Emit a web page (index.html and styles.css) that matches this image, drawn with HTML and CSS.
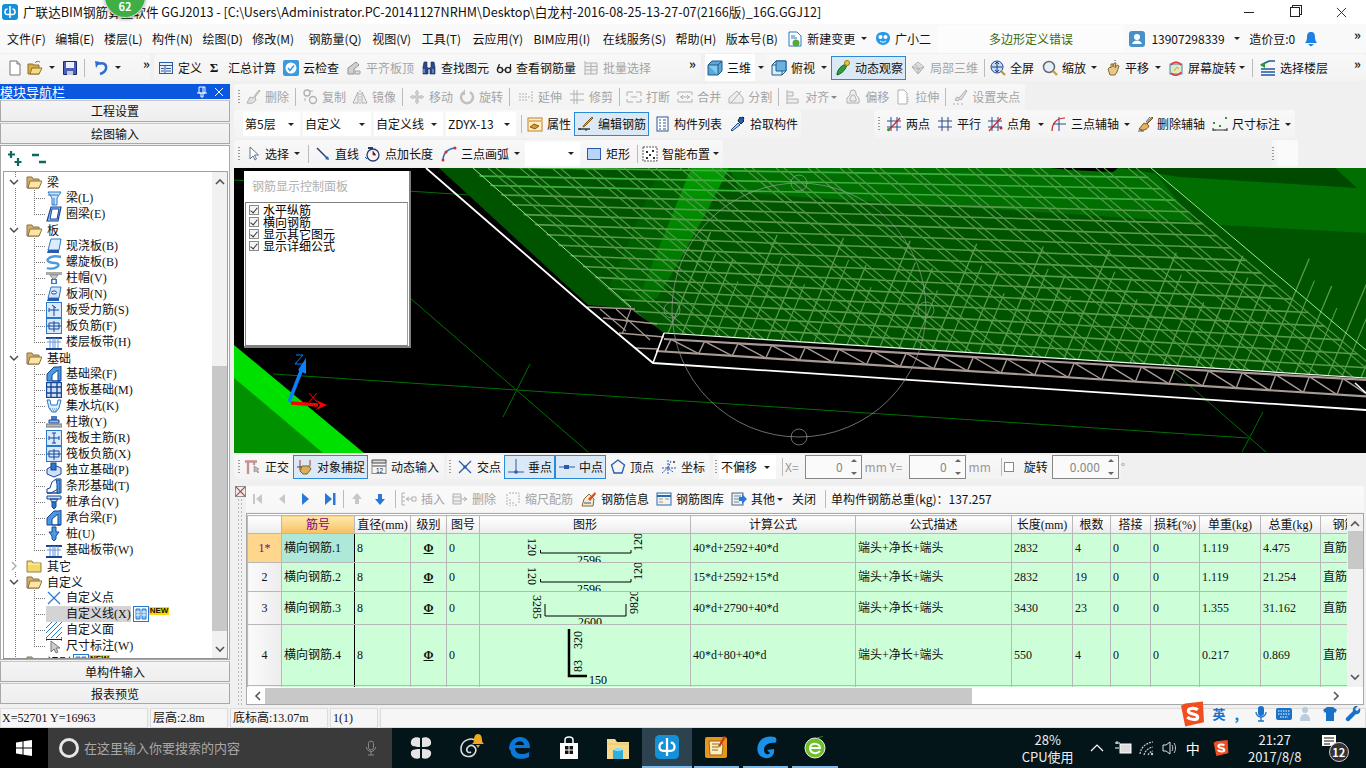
FILE: index.html
```html
<!DOCTYPE html>
<html lang="zh-CN">
<head>
<meta charset="utf-8">
<title>广联达BIM钢筋算量软件 GGJ2013</title>
<link rel="stylesheet" href="styles.css">
</head>
<body>
<svg class="sprite" xmlns="http://www.w3.org/2000/svg">
<defs>
<symbol id="new" viewBox="0 0 16 16"><path d="M3 1h7l3 3v11H3z" fill="#fff" stroke="#777"/><path d="M10 1v3h3" fill="#ddd" stroke="#777"/></symbol>
<symbol id="open" viewBox="0 0 16 16"><path d="M1 4h5l1 1h5v9H1z" fill="#d8ac44" stroke="#8f6f28"/><path d="M3 14l2-6h10l-3 6z" fill="#f5dc8a" stroke="#8f6f28"/><path d="M8 3c1-2 3-2 5-1" stroke="#3a7bd5" fill="none"/></symbol>
<symbol id="save" viewBox="0 0 16 16"><path d="M1.500 1.500h13v13h-13z" fill="#4a5fb8" stroke="#1a2a70"/><path d="M4 2h8v6H4z" fill="#eef"/><path d="M5 11h6v4H5z" fill="#c4c8d8"/></symbol>
<symbol id="undo" viewBox="0 0 16 16"><path d="M5 4c5-2 9 0 8 5-1 3-3 4-6 5" stroke="#2a6fd0" stroke-width="2.400" fill="none"/><path d="M2 1l5 1-4 6z" fill="#2a6fd0"/></symbol>
<symbol id="def" viewBox="0 0 16 16"><rect x="1.500" y="2.500" width="13" height="11" fill="#e8f0fa" stroke="#2a5aa0"/><path d="M2 5.500h12M3 8.500h3M3 11h3M8 8.500h5M8 11h5M7 6v7" stroke="#2a5aa0"/></symbol>
<symbol id="cloud" viewBox="0 0 16 16"><rect x="0" y="0" width="16" height="16" rx="2" fill="#3a9ae0"/><circle cx="8" cy="8" r="5.500" fill="#fff"/><path d="M5 8l2 2.500 4-5" stroke="#3a9ae0" stroke-width="1.600" fill="none"/></symbol>
<symbol id="flush" viewBox="0 0 16 16"><path d="M2 14V8l8-6 3 3-5 4v5z" fill="#ccc" stroke="#888"/><path d="M9 14v-3h5v3z" fill="#ddd" stroke="#999"/></symbol>
<symbol id="bino" viewBox="0 0 16 16"><path d="M2 7l1-5h3v5l1 1h2l1-1V2h3l1 5v7H9V9H7v5H2z" fill="#2b4a8a" stroke="#142850" stroke-width=".6"/><path d="M3 9v4M12 9v4" stroke="#9db8e8"/></symbol>
<symbol id="glass" viewBox="0 0 16 16"><circle cx="4" cy="10" r="2.600" fill="none" stroke="#222" stroke-width="1.400"/><circle cx="12" cy="10" r="2.600" fill="none" stroke="#222" stroke-width="1.400"/><path d="M1.500 9l2-5M14.500 9V4M6.500 10h3" stroke="#222" stroke-width="1.200" fill="none"/></symbol>
<symbol id="batch" viewBox="0 0 16 16"><path d="M2 1v14M2 3h12v11H2M2 6.500h12M2 10h12M8 3v11" fill="#eee" stroke="#aaa"/></symbol>
<symbol id="cube" viewBox="0 0 16 16"><path d="M1 5l4-4h10v10l-4 4H1z" fill="#5aa8dc" stroke="#1e5a8c"/><path d="M1 5h10v10M11 5l4-4" fill="#8cc8ec" stroke="#1e5a8c"/></symbol>
<symbol id="top" viewBox="0 0 16 16"><path d="M1 5l4-4h10v10l-4 4H1z" fill="#d8ecfa" stroke="#1e5a8c"/><path d="M1 5h10v10M11 5l4-4" fill="none" stroke="#1e5a8c"/><path d="M5 1h10v10H5z" fill="#6ab0e0" stroke="#1e5a8c"/></symbol>
<symbol id="orbit" viewBox="0 0 16 16"><path d="M2 15c0-5 4-10 10-11-1 5-4 9-10 11z" fill="#2fa03a" stroke="#156020"/><circle cx="12" cy="3" r="2.500" fill="#f3c72c" stroke="#9a7a10"/></symbol>
<symbol id="local" viewBox="0 0 16 16"><path d="M2 7l6-5 6 5-6 7z" fill="#ddd" stroke="#aaa"/><path d="M2 7l6 2 6-2M8 9v5M5 4l6 7" stroke="#aaa" fill="none"/></symbol>
<symbol id="full" viewBox="0 0 16 16"><circle cx="7" cy="7" r="6" fill="#c8dcf4" stroke="#20408a"/><path d="M7 2v10M2 7h10M5 4l2-2 2 2M5 10l2 2 2-2" stroke="#20408a" fill="none"/><path d="M11 11l4 4" stroke="#c89020" stroke-width="2"/></symbol>
<symbol id="zoomi" viewBox="0 0 16 16"><circle cx="7" cy="7" r="5.500" fill="#e8eef6" stroke="#606a78" stroke-width="1.500"/><path d="M11 11l4 4" stroke="#d0a020" stroke-width="2.400"/></symbol>
<symbol id="hand" viewBox="0 0 16 16"><path d="M3 9l2-2 1 1V4h2v3l1-4h2l-1 5 2-3 2 1-2 6-2 3H5z" fill="#e8c888" stroke="#8a6a30"/><path d="M10 1v-1" stroke="#456"/></symbol>
<symbol id="srot" viewBox="0 0 16 16"><rect x="2" y="4" width="12" height="10" fill="#d8ecc8" stroke="#4a80b8"/><path d="M3 5a6 6 0 0 1 10 0M13 12a6 6 0 0 1-10 1" stroke="#e03030" stroke-width="1.400" fill="none"/><path d="M6 11l3-4 2 2" stroke="#e0a020" fill="none"/></symbol>
<symbol id="layer" viewBox="0 0 16 16"><path d="M1 5l8-4h6M1 9h14M1 12h14M1 15h14" stroke="#1a5aa0" stroke-width="1.600" fill="none"/><path d="M0 5l5-3v6z" fill="#2a9a30"/></symbol>
<symbol id="doc" viewBox="0 0 16 16"><path d="M2 1h8l4 4v10H2z" fill="#fff" stroke="#2a78c8"/><path d="M4 5h4M4 7h6" stroke="#2a78c8"/><circle cx="9" cy="12" r="3.500" fill="#5aa838"/></symbol>
<symbol id="robot" viewBox="0 0 16 16"><path d="M1 7c0-4 3-6 7-6s7 2 7 6-3 7-7 7-7-3-7-7z" fill="#2a9ae8"/><circle cx="5.500" cy="6" r="2" fill="#fff"/><circle cx="10.500" cy="6" r="2" fill="#fff"/><path d="M5 10c2 1.500 4 1.500 6 0" stroke="#fff" fill="none"/></symbol>
<symbol id="user" viewBox="0 0 16 16"><rect width="16" height="16" rx="3" fill="#4a90c8"/><circle cx="8" cy="6" r="3" fill="#fff"/><path d="M3 13c1-3 3-3.500 5-3.500s4 .5 5 3.500z" fill="#fff"/></symbol>
<symbol id="bell" viewBox="0 0 16 16"><path d="M8 1c3 0 4 2 4 5 0 3 1 5 2 6H2c1-1 2-3 2-6 0-3 1-5 4-5z" fill="#1e80e0"/><path d="M5 13h6l-3 2.500z" fill="#1e80e0"/></symbol>
<symbol id="logo" viewBox="0 0 16 16"><rect width="16" height="16" rx="3" fill="#1590d8"/><path d="M8 2v12M5.500 5C2.500 5 2 10 5 10.500h6c3-.5 2.500-5.500-.5-5.500" stroke="#fff" stroke-width="1.500" fill="none"/></symbol>

<symbol id="del" viewBox="0 0 16 16"><path d="M14 1l-6 8-3-1-3 6c4 1 7 0 9-3l-1-3 5-6z" fill="#ddd" stroke="#aaa"/></symbol>
<symbol id="copy" viewBox="0 0 16 16"><circle cx="5" cy="4" r="3" fill="none" stroke="#aaa" stroke-width="1.400"/><circle cx="11" cy="11" r="3.500" fill="none" stroke="#aaa" stroke-width="1.400"/><path d="M8 2h3M3 9v3" stroke="#aaa"/></symbol>
<symbol id="mirror" viewBox="0 0 16 16"><path d="M6 3v11H1zM10 3v11h5z" fill="#eee" stroke="#aaa"/><path d="M8 1v14" stroke="#aaa" stroke-dasharray="2 1"/></symbol>
<symbol id="move" viewBox="0 0 16 16"><path d="M8 1l2 3H9v3h3V6l3 2-3 2V9H9v3h1l-2 3-2-3h1V9H4v1L1 8l3-2v1h3V4H6z" fill="#ccc" stroke="#aaa" stroke-width=".5"/></symbol>
<symbol id="rot" viewBox="0 0 16 16"><path d="M11 3a6 6 0 1 1-6 0" stroke="#bbb" stroke-width="2.500" fill="none"/><path d="M6 0v6H2z" fill="#bbb"/></symbol>
<symbol id="ext" viewBox="0 0 16 16"><path d="M14 2v12M1 5h9M1 11h9M1 8h11" stroke="#aaa" fill="none" stroke-dasharray="2 1"/></symbol>
<symbol id="trim" viewBox="0 0 16 16"><path d="M8 1v14M5 1v14M1 5h14M1 11h14" stroke="#aaa" fill="none"/></symbol>
<symbol id="brk" viewBox="0 0 16 16"><path d="M1 3h6M10 3h5M1 13h6M10 13h5M1 3v4M15 3v4M1 13v-3M15 13v-3M5 8h6" stroke="#aaa" fill="none"/></symbol>
<symbol id="merge" viewBox="0 0 16 16"><path d="M1 3h14M1 13h14M1 3v3M15 3v3M1 13v-3M15 13v-3M3 8h10M6 6l-2 2 2 2M10 6l2 2-2 2" stroke="#aaa" fill="none"/></symbol>
<symbol id="split" viewBox="0 0 16 16"><path d="M1 14h14L15 9 9 2 1 9z" fill="#eee" stroke="#aaa"/><path d="M13 2L3 14" stroke="#aaa"/></symbol>
<symbol id="align" viewBox="0 0 16 16"><path d="M2 1v14M2 3h6v4H2M2 10h11v4H2" fill="#eee" stroke="#aaa"/></symbol>
<symbol id="offs" viewBox="0 0 16 16"><path d="M2 14V9l3-3V4a3 3 0 0 1 6 0v2l3 3v5z" fill="#eee" stroke="#aaa"/><path d="M5 12V9l1-1a2 2 0 0 1 4 0l1 1v3z" fill="none" stroke="#aaa"/></symbol>
<symbol id="stch" viewBox="0 0 16 16"><path d="M3 1h6l3 3v11H3z" fill="#fff" stroke="#aaa"/><path d="M13 8v6" stroke="#aaa" stroke-dasharray="1 1"/></symbol>
<symbol id="grip2" viewBox="0 0 16 16"><path d="M14 1l-7 8-2-1-2 3 3 1 1-2 2 1 6-9zM1 15h2M5 15h2M9 15h2" fill="#ddd" stroke="#aaa"/></symbol>

<symbol id="attr" viewBox="0 0 16 16"><rect x="1" y="2" width="14" height="13" fill="#fdf0c8" stroke="#c88020"/><path d="M2 5h12" stroke="#c88020"/><path d="M3 11l4-3 5 2-4 3z" fill="#d89830" stroke="#8a5a10"/></symbol>
<symbol id="edit" viewBox="0 0 16 16"><path d="M0 13h12" stroke="#222" stroke-width="1.300"/><path d="M15 2l-8 8-2 1 1-2 8-8z" fill="#e0a040" stroke="#8a5a10"/><path d="M2 12v2M8 13v2" stroke="#222"/></symbol>
<symbol id="list" viewBox="0 0 16 16"><rect x="3" y="1" width="11" height="14" fill="#fff" stroke="#2a5a90"/><path d="M5 4h2M5 7h2M5 10h2M5 13h2M9 4h3M9 7h3M9 10h3M9 13h3" stroke="#2a5a90"/></symbol>
<symbol id="pick" viewBox="0 0 16 16"><path d="M2 15l-1-1 7-7 2 2z" fill="#a8d0f0" stroke="#1a4a8a"/><path d="M8 5l3 3 3-3-1-1 1-2-1-1-2 1-1-1z" fill="#2a60b0" stroke="#123"/></symbol>
<symbol id="two" viewBox="0 0 16 16"><path d="M1 5h14M1 11h14M5 1v14M11 1v14" stroke="#2a4a90" fill="none"/><path d="M2 15L14 2" stroke="#d02020" stroke-width="1.200"/><circle cx="2.500" cy="13.500" r="1.500" fill="#2a9a30"/></symbol>
<symbol id="para" viewBox="0 0 16 16"><path d="M1 5h14M1 11h14M5 1v14M11 1v14" stroke="#2a4a90" fill="none"/></symbol>
<symbol id="ang" viewBox="0 0 16 16"><path d="M1 5h14M1 11h14M5 1v14M11 1v14" stroke="#2a4a90" fill="none"/><path d="M2 15L14 2" stroke="#d02020" stroke-width="1.200"/><circle cx="14" cy="12" r="1.500" fill="#d02020"/></symbol>
<symbol id="arcx" viewBox="0 0 16 16"><path d="M1 15C1 7 6 2 14 2" stroke="#d02020" stroke-width="1.200" fill="none"/><path d="M8 1v14M2 8h13" stroke="#2a4a90"/></symbol>
<symbol id="delx" viewBox="0 0 16 16"><path d="M15 1L9 8l-2-1-5 6c4 2 8 1 10-3l-2-2 6-6z" fill="#e8b060" stroke="#7a5a20"/><path d="M1 15h6M2 12l3 3" stroke="#555"/><path d="M13 1l-4 5" stroke="#2a60b0"/></symbol>
<symbol id="dim" viewBox="0 0 16 16"><path d="M1 12v3M15 12v3M1 14h14M3 13.500v1M13 13.500v1" stroke="#333" fill="none"/><rect x="1" y="6" width="2" height="2" fill="#2a9a30"/><rect x="7" y="9" width="2" height="2" fill="#2a9a30"/><rect x="13" y="1" width="2" height="2" fill="#2a9a30"/></symbol>
<symbol id="arrow" viewBox="0 0 16 16"><path d="M5 1v12l3-3 2 4 1.500-1-2-4h4z" fill="#fff" stroke="#456" stroke-width=".8"/></symbol>
<symbol id="linet" viewBox="0 0 16 16"><path d="M2 2l11 11" stroke="#2a3a70" stroke-width="1.400"/><path d="M14 14l-4-1 3-3z" fill="#2a6ac0"/></symbol>
<symbol id="ptlen" viewBox="0 0 16 16"><circle cx="8" cy="9" r="6" fill="none" stroke="#2a3a70" stroke-width="1.300"/><path d="M3 2h5" stroke="#2a3a70" stroke-width="2"/><path d="M8 5v4h3" stroke="#d03030"/><path d="M2 13l-2-2" stroke="#2a6ac0"/></symbol>
<symbol id="arc3" viewBox="0 0 16 16"><path d="M2 15C2 8 6 3 14 2" stroke="#2a6ac0" stroke-width="1.400" fill="none"/><circle cx="2" cy="14" r="1.500" fill="#d03030"/><circle cx="14" cy="2" r="1.500" fill="#d03030"/><circle cx="5" cy="6" r="1.500" fill="#d03030"/></symbol>
<symbol id="rect" viewBox="0 0 16 16"><rect x="1.500" y="2.500" width="13" height="11" fill="#b8d4f8" stroke="#2a5ab0"/></symbol>
<symbol id="smart" viewBox="0 0 16 16"><rect x="1" y="1" width="14" height="14" fill="#fff" stroke="#555" stroke-dasharray="2 1"/><path d="M4 5h2v2H4zM10 4h2v2h-2zM7 8h2v2H7zM4 11h2v2H4zM11 11h2v2h-2z" fill="#333"/></symbol>

<symbol id="ortho" viewBox="0 0 16 16"><path d="M0 2.500h12M3 2v13M9 2v4" stroke="#c89090" stroke-width="2.400" fill="none"/><path d="M9 7v6l2-1 2 2 1-1-2-2 2-1z" fill="#bbb" stroke="#777" stroke-width=".5"/></symbol>
<symbol id="snap" viewBox="0 0 16 16"><path d="M3 1v10M13 1v6" stroke="#b03030"/><path d="M0 8h6" stroke="#345"/><path d="M5 7h7l2 3-4 5H6l-3-3z" fill="#d8b060" stroke="#806020"/></symbol>
<symbol id="dyn" viewBox="0 0 16 16"><path d="M1 1h14v3H1zM1 7h14" stroke="#444" fill="#ddd"/><path d="M1 4v11M15 4v11M1 14.500h14" stroke="#888" fill="none"/><text x="5" y="14" font-size="6.500" font-family="Liberation Sans, sans-serif" fill="#222">12</text></symbol>
<symbol id="cross" viewBox="0 0 16 16"><path d="M2 2l12 12M14 2L2 14" stroke="#2a5ab0" stroke-width="1.300"/><rect x="6.500" y="6.500" width="3" height="3" fill="#2a5ab0"/></symbol>
<symbol id="perp" viewBox="0 0 16 16"><path d="M8 0v13M0 13h16" stroke="#2a5ab0"/><circle cx="8" cy="13" r="1.800" fill="#2a5ab0"/></symbol>
<symbol id="mid" viewBox="0 0 16 16"><path d="M0 8h16" stroke="#2a5ab0"/><rect x="5" y="6" width="5" height="4" fill="#2a5ab0"/></symbol>
<symbol id="apex" viewBox="0 0 16 16"><path d="M8 1l6.500 5-2.500 8H4L1.500 6z" fill="none" stroke="#2a5ab0" stroke-width="1.300"/></symbol>
<symbol id="coord" viewBox="0 0 16 16"><path d="M1 14l6-5M7 1v14M1 9h14M10 2l-3 7 5 4" stroke="#2a5ab0" fill="none" stroke-dasharray="2 1"/><circle cx="13" cy="3" r="1" fill="#333"/></symbol>

<symbol id="nfirst" viewBox="0 0 16 16"><path d="M4 3h2v10H4zM13 3L7 8l6 5z" fill="#c8c8c8"/></symbol>
<symbol id="nprev" viewBox="0 0 16 16"><path d="M11 3L5 8l6 5z" fill="#c8c8c8"/></symbol>
<symbol id="nnext" viewBox="0 0 16 16"><path d="M5 2l7 6-7 6z" fill="#2a78d8"/></symbol>
<symbol id="nlast" viewBox="0 0 16 16"><path d="M3 2l7 6-7 6zM11 2h2.500v12H11z" fill="#2a78d8"/></symbol>
<symbol id="nup" viewBox="0 0 16 16"><path d="M8 2l5 6h-3v5H6V8H3z" fill="#c8c8c8"/></symbol>
<symbol id="ndown" viewBox="0 0 16 16"><path d="M8 14l5-6h-3V3H6v5H3z" fill="#2a78d8"/></symbol>
<symbol id="tins" viewBox="0 0 16 16"><path d="M1 2h3M1 6h3M1 10h3M1 14h3M1 2v12M5 8h6M8 6l-3 2 3 2M11 6h4v4h-4z" stroke="#aaa" fill="none"/></symbol>
<symbol id="tdel" viewBox="0 0 16 16"><path d="M1 3h8v10H1zM1 6h8M1 10h8M9 8h6M12 6l3 2-3 2" stroke="#aaa" fill="#eee"/></symbol>
<symbol id="tscale" viewBox="0 0 16 16"><path d="M2 3v12M5 8v7M8 11v4M11 13v2M4 2h10v10" stroke="#aaa" fill="none" stroke-dasharray="2 1"/></symbol>
<symbol id="tinfo" viewBox="0 0 16 16"><path d="M1 15l2-7 5-5 5 5-1 7z" fill="#f5e8c8" stroke="#8a6a30"/><path d="M7 8l7-7 1 2-6 7z" fill="#d85020"/><path d="M3 12h7" stroke="#2a5ab0"/></symbol>
<symbol id="tlib" viewBox="0 0 16 16"><rect x="1" y="2" width="14" height="12" fill="#eef4fc" stroke="#2a6ab0"/><path d="M1 5h14" stroke="#2a6ab0" stroke-width="2"/><path d="M3 8h4M9 8h4M3 11h4" stroke="#d09030"/></symbol>
<symbol id="toth" viewBox="0 0 16 16"><rect x="1" y="2" width="11" height="12" fill="#e8f0f8" stroke="#567"/><path d="M3 5h7M3 8h5M3 11h5" stroke="#789"/><path d="M8 6h3V3l5 5-5 5v-3H8z" fill="#2a78d8"/></symbol>

<symbol id="fopen" viewBox="0 0 16 16"><path d="M1 3h5l1 2h6v9H1z" fill="#d8b060" stroke="#8a7040"/><path d="M2 14l2-7h12l-3 7z" fill="#fbe6a8" stroke="#8a7040"/></symbol>
<symbol id="fclose" viewBox="0 0 16 16"><path d="M1 3h5l1 2h8v9H1z" fill="#f6d868" stroke="#9a8040"/><path d="M2 6h12" stroke="#fff5c0"/></symbol>
<symbol id="vdown" viewBox="0 0 10 10"><path d="M1 3l4 4 4-4" stroke="#444" stroke-width="1.400" fill="none"/></symbol>
<symbol id="vright" viewBox="0 0 10 10"><path d="M3 1l4 4-4 4" stroke="#aaa" stroke-width="1.400" fill="none"/></symbol>
<symbol id="beam" viewBox="0 0 16 16"><path d="M2 2h13l-4 6v7H6V8z" fill="#cfe6fb" stroke="#2a78c8"/><path d="M2 5h10M8 8v7" stroke="#2a78c8"/></symbol>
<symbol id="ring" viewBox="0 0 16 16"><path d="M5 1h10l-3 14H1z" fill="#9cc4ec" stroke="#15469a" stroke-width="1.200"/><path d="M6 3h7l-2 10H4z" fill="#fff" stroke="#15469a"/></symbol>
<symbol id="slabi" viewBox="0 0 16 16"><path d="M5 1h10l-2 11H2z" fill="#dcecfb" stroke="#2a78c8"/><path d="M2 12h11v3H1z" fill="#2a5ab0"/></symbol>
<symbol id="spir" viewBox="0 0 16 16"><path d="M15 3c-4-1-10-1-13 2-2 3 4 4 7 4s5 2 2 4-8 2-10 1" stroke="#4a9ae0" stroke-width="2.400" fill="none"/></symbol>
<symbol id="cap" viewBox="0 0 16 16"><rect y="2" width="16" height="3" fill="#aaa"/><path d="M4 5h8L9 9H7z" fill="#ccc" stroke="#888"/><rect x="5" y="9" width="6" height="5" fill="#2a78c8"/><rect x="6.500" y="10" width="3" height="3" fill="#fff"/></symbol>
<symbol id="hole" viewBox="0 0 16 16"><path d="M5 1h10l-2 11H2z" fill="#cfe6fb" stroke="#2a78c8"/><path d="M2 12h11v3H1z" fill="#2a5ab0"/><ellipse cx="8" cy="6.500" rx="2.500" ry="1.500" fill="#fff" stroke="#15469a"/></symbol>
<symbol id="force" viewBox="0 0 16 16"><rect x=".5" y=".5" width="15" height="15" fill="#d8eafc" stroke="#2a78c8"/><path d="M3 8h10M8 4v10M3 6v4M6 3l4 3" stroke="#15469a" fill="none"/></symbol>
<symbol id="negi" viewBox="0 0 16 16"><rect x=".5" y=".5" width="15" height="15" fill="#d8eafc" stroke="#2a78c8"/><path d="M3 5h10v6H3zM1 8h14M8 3v11" stroke="#15469a" fill="none"/></symbol>
<symbol id="band" viewBox="0 0 16 16"><path d="M0 4h16M0 15h16" stroke="#15469a" stroke-width="2"/><path d="M4 4v10M12 4v10M7 4v10M9 4v10M1 8h14" stroke="#6a9ad8" fill="none"/></symbol>
<symbol id="fbeam" viewBox="0 0 16 16"><path d="M1 15V8l7-7h5l2-1v15h-3V4L6 9v6z" fill="#4a9ae0" stroke="#15469a"/><path d="M6 15h8" stroke="#15469a" stroke-width="1.500"/></symbol>
<symbol id="raft" viewBox="0 0 16 16"><rect x=".5" y=".5" width="15" height="15" fill="#cfe0f8" stroke="#15469a" stroke-width="1.400"/><path d="M5 1v14M11 1v14M1 5h14M1 11h14" stroke="#15469a" stroke-width="1.400"/></symbol>
<symbol id="pit" viewBox="0 0 16 16"><path d="M1 2h3l1 5h6l1-5h3l-2 8-3 4H6l-3-4z" fill="#dcecfb" stroke="#2a78c8"/><path d="M4 11h8M5 13h6" stroke="#2a78c8" stroke-dasharray="1 1"/></symbol>
<symbol id="pier" viewBox="0 0 16 16"><rect x="5" y="2" width="6" height="4" fill="#4a7ac0"/><path d="M3 6h10v3H3z" fill="#9abce8" stroke="#15469a"/><rect y="10" width="16" height="3" fill="#bbb" stroke="#777"/></symbol>
<symbol id="rmain" viewBox="0 0 16 16"><rect x=".5" y=".5" width="15" height="15" fill="#d8eafc" stroke="#2a78c8"/><path d="M3 8h10M8 3v10M3 6v4M6 3h4M13 6v4M6 13h4" stroke="#15469a" fill="none"/></symbol>
<symbol id="ifound" viewBox="0 0 16 16"><path d="M1 7l7-4 7 3v6l-7 3-7-3z" fill="#cfe0f8" stroke="#15469a"/><rect x="5" y="1" width="5" height="7" fill="#2a78c8" stroke="#15469a"/></symbol>
<symbol id="strip" viewBox="0 0 16 16"><path d="M1 15v-4l3-1 2-6 4-3h5v14h-3V11L5 15z" fill="#fff" stroke="#15469a"/><path d="M10 2h4v13h-3V6z" fill="#4a9ae0" stroke="#15469a"/><path d="M1 15h11" stroke="#15469a" stroke-width="1.400"/></symbol>
<symbol id="pcap" viewBox="0 0 16 16"><path d="M1 2h14v3H1zM4 5h8l-2 3H6z" fill="#cfe0f8" stroke="#15469a"/><path d="M6 8h4v5l-2 2-2-2z" fill="#2a78c8" stroke="#15469a"/></symbol>
<symbol id="pile" viewBox="0 0 16 16"><path d="M6 1h4v5h3l-3 4v3l-2 2-2-2v-3L3 6h3z" fill="#4a9ae0" stroke="#15469a"/></symbol>
<symbol id="xpt" viewBox="0 0 16 16"><path d="M2 2l12 12M14 2L2 14" stroke="#2a78c8" stroke-width="1.200"/></symbol>
<symbol id="xln" viewBox="0 0 16 16"><path d="M2.500 2.500h11v11h-11z" fill="none" stroke="#15469a"/><path d="M1 1h3v3H1zM12 1h3v3h-3zM1 12h3v3H1zM12 12h3v3h-3z" fill="#d8eafc" stroke="#2a78c8"/></symbol>
<symbol id="xar" viewBox="0 0 16 16"><path d="M0 6L6 0M0 11L11 0M0 16L16 0M5 16L16 5M10 16l6-6M15 16l1-1" stroke="#2a78c8"/></symbol>
<symbol id="xdim" viewBox="0 0 16 16"><path d="M0 0v3M16 0v3M0 1.500h16M3 1v1M8 1v1M13 1v1" stroke="#222"/><path d="M5 3v11l3-3 2 4 2-1-2-4h4z" fill="#ccc" stroke="#777"/></symbol>
<symbol id="tab" viewBox="0 0 16 16"><rect x=".5" y=".5" width="15" height="15" fill="#fff" stroke="#2a78c8"/><path d="M3 3h4v10H3zM9 3h4v10H9z" fill="#8cc4f4" stroke="#2a78c8"/><path d="M3 6h4M3 9h4M9 6h4M9 9h4" stroke="#fff"/></symbol>
<symbol id="plus2" viewBox="0 0 16 16"><path d="M4 0v7M1 3.500h7M11 7v8M7.500 11h7" stroke="#0a6a60" stroke-width="2.200"/></symbol>
<symbol id="minus2" viewBox="0 0 16 16"><path d="M1 4h7M8 11h7" stroke="#0a6a60" stroke-width="2.400"/></symbol>
<symbol id="pin" viewBox="0 0 12 12"><path d="M3 1h6v6H7v4H5V7H3zM1 7h10M7 1v6" stroke="#fff" fill="none"/></symbol>
<symbol id="xw" viewBox="0 0 12 12"><path d="M2 2l8 8M10 2l-8 8" stroke="#fff"/></symbol>
<symbol id="closex" viewBox="0 0 12 12"><rect x=".5" y=".5" width="11" height="11" fill="#eee" stroke="#888"/><path d="M1 1l10 10M11 1L1 11" stroke="#a05050" stroke-width="1.400"/></symbol>

<symbol id="win" viewBox="0 0 16 16"><path d="M0 2.500l6.500-1v6H0zM7.500 1.300L16 0v7.500H7.500zM0 8.500h6.500v6L0 13.500zM7.500 8.500H16V16l-8.500-1.300z" fill="#fff"/></symbol>
<symbol id="mic" viewBox="0 0 16 16"><rect x="5.500" y="1" width="5" height="9" rx="2.500" fill="none" stroke="#888"/><path d="M3.500 7a4.500 4.500 0 0 0 9 0M8 12v3M5 15h6" fill="none" stroke="#888"/></symbol>
<symbol id="fan" viewBox="0 0 24 24"><path d="M11 2C6 0 1 3 2 8c1 3 6 3 9 3zM13 2c5-2 10 1 9 6-1 3-6 3-9 3zM11 13c-3 0-8 0-9 3-1 5 4 8 9 6zM13 13c3 0 8 0 9 3 1 5-4 8-9 6z" fill="#e4e4e4"/></symbol>
<symbol id="swirl" viewBox="0 0 24 24"><path d="M20 6C14 0 3 4 3 13c0 8 10 10 14 4 3-5-3-10-7-6-3 3 0 7 3 5" fill="none" stroke="#ddd" stroke-width="1.600"/></symbol>
<symbol id="bellg" viewBox="0 0 12 14"><path d="M6 0c3 0 4 3 4 6 0 2 1 3 2 4H0c1-1 2-2 2-4 0-3 1-6 4-6zM4 11h4l-2 3z" fill="#f0a820"/></symbol>
<symbol id="edge" viewBox="0 0 24 24"><path d="M2 13C2 5 8 1 13 1c6 0 10 4 10 11H8c0 6 8 8 14 4v5c-8 4-17 1-18-4 0-1 0-3-2-4zm6-4h9c0-5-8-5-9 0z" fill="#0a78d8"/></symbol>
<symbol id="store" viewBox="0 0 24 24"><path d="M3 7h18v16H3z" fill="#fff"/><path d="M8 7V4c0-4 8-4 8 0v3" fill="none" stroke="#fff" stroke-width="1.500"/><path d="M8 10h3.500v3.500H8zM12.500 10H16v3.500h-3.500zM8 14.500h3.500V18H8zM12.500 14.500H16V18h-3.500z" fill="#111"/></symbol>
<symbol id="fold" viewBox="0 0 24 24"><path d="M1 3h8l2 3h12v17H1z" fill="#f6d98a"/><path d="M1 8h22" stroke="#eac66a"/><rect x="7" y="14" width="10" height="9" fill="#2fb0d8"/><rect x="9" y="12" width="6" height="3" fill="#8adcf0"/></symbol>
<symbol id="note" viewBox="0 0 24 24"><rect x="1" y="2" width="22" height="21" rx="2" fill="#e8961a"/><path d="M5 6h12l2 5-1 9H6z" fill="#faeebc" stroke="#a0641a"/><path d="M8 9h7M8 12h7M8 15h6" stroke="#9a6a2a"/><path d="M20 1l2 1-6 10-2-1z" fill="#c83a1a"/></symbol>
<symbol id="gblue" viewBox="0 0 24 24"><path d="M21 2c-8-2-15 1-17 8-2 7 1 12 7 13 6 1 10-3 9-9l-7 1 3 3c-2 3-6 1-6-3 0-5 5-8 11-7 2-2 2-4 0-6z" fill="#1a90e8"/></symbol>
<symbol id="egreen" viewBox="0 0 24 24"><circle cx="12" cy="13" r="10" fill="#6ec02a" stroke="#eee"/><path d="M7 13h10c0-5-9-6-10 0 0 5 6 7 10 3" fill="none" stroke="#fff" stroke-width="2"/><path d="M14 3c3-1 5-1 6-2" stroke="#3a8a1a"/></symbol>
<symbol id="up" viewBox="0 0 14 10"><path d="M1 8l6-6 6 6" stroke="#fff" stroke-width="1.200" fill="none"/></symbol>
<symbol id="plug" viewBox="0 0 18 16"><rect x="6" y="4" width="11" height="9" fill="#ddd" stroke="#fff"/><path d="M1 3h5M1 8h4M3 1v3" stroke="#fff" fill="none"/></symbol>
<symbol id="wifi" viewBox="0 0 16 16"><path d="M1 14C2 7 7 3 14 2M5 15c1-4 4-7 9-8M9 15c1-2 2-3 5-4" stroke="#ccc" stroke-width="1.200" fill="none" stroke-dasharray="2 1"/><circle cx="13" cy="14" r="1.200" fill="#ccc"/></symbol>
<symbol id="spk" viewBox="0 0 16 16"><path d="M1 5h3l4-3v12l-4-3H1z" fill="none" stroke="#ddd"/><path d="M10 5c1 2 1 4 0 6M12 3c2 3 2 7 0 10" stroke="#ccc" fill="none"/></symbol>
<symbol id="sgou" viewBox="0 0 24 24"><path d="M5 2l17-2 1 20-18 4-4-20z" fill="#f04e20"/><path d="M17 8c-2-2-9-2-9 1 0 4 9 2 9 6 0 3-7 3-10 0" fill="none" stroke="#fff" stroke-width="3"/></symbol>
<symbol id="notif" viewBox="0 0 16 16"><path d="M1 1h14v11H1z" fill="#fff"/><path d="M3 4h10M3 7h10M3 10h6" stroke="#111"/></symbol>
<symbol id="imic" viewBox="0 0 16 16"><rect x="5" y="0" width="6" height="10" rx="3" fill="#1a72c8"/><path d="M3 6a5 5 0 0 0 10 0M8 11v4M5 15h6" fill="none" stroke="#1a72c8" stroke-width="1.300"/></symbol>
<symbol id="ikey" viewBox="0 0 16 16"><rect y="2" width="16" height="12" rx="2" fill="#1a72c8"/><path d="M2 5h12M2 8h12M4 11h8" stroke="#fff" stroke-dasharray="1.500 1"/></symbol>
<symbol id="iuser" viewBox="0 0 16 16"><circle cx="6" cy="4" r="3" fill="#bcd"/><path d="M1 15c0-5 2-7 5-7s5 2 5 7z" fill="#bcd"/></symbol>
<symbol id="ishirt" viewBox="0 0 16 16"><path d="M1 4l4-3h6l4 3-2 3-1-1v9H4V6L3 7z" fill="#1a72c8"/></symbol>
<symbol id="iwr" viewBox="0 0 16 16"><path d="M15 2l-3 3-2-2 3-3c-3-1-6 2-5 5L1 12c-1 2 1 4 3 3l7-7c3 1 5-2 4-6z" fill="#1a72c8"/></symbol>
</defs>
</svg>

<div class="title">
  <svg class="i logoi"><use href="#logo"/></svg>
  <span class="ttext">广联达BIM钢筋算量软件 GGJ2013 - [C:\Users\Administrator.PC-20141127NRHM\Desktop\白龙村-2016-08-25-13-27-07(2166版)_16G.GGJ12]</span>
  <div class="wctl">
    <span class="w-min"></span><span class="w-max"></span>
    <svg class="w-x" viewBox="0 0 12 12"><path d="M1 1l10 10M11 1L1 11" stroke="#222" fill="none"/></svg>
  </div>
  <div class="badge"><span>62</span></div>
</div>

<div class="menu">
  <span>文件(F)</span><span>编辑(E)</span><span>楼层(L)</span><span>构件(N)</span><span>绘图(D)</span><span>修改(M)</span><span class="ml5">钢筋量(Q)</span><span class="ml1">视图(V)</span><span class="ml1">工具(T)</span><span class="ml2">云应用(Y)</span><span class="ml1">BIM应用(I)</span><span class="ml3">在线服务(S)</span><span>帮助(H)</span><span>版本号(B)</span>
  <span class="t"><svg class="i"><use href="#doc"/></svg>新建变更<i class="car k2"></i></span>
  <span class="t mn2"><svg class="i"><use href="#robot"/></svg>广小二</span>
  <span class="errbox">多边形定义错误</span>
  <span class="t acct"><svg class="i"><use href="#user"/></svg>13907298339<i class="car k5"></i></span>
  <span>造价豆:0</span>
  <svg class="i mn2"><use href="#bell"/></svg>
  <span class="more endm">»</span>
</div>

<div class="tbr1">
  <div class="grp ga">
    <svg class="i"><use href="#new"/></svg>
    <svg class="i"><use href="#open"/></svg><i class="car k2"></i>
    <svg class="i ml3"><use href="#save"/></svg>
    <i class="sep ml2"></i>
    <svg class="i ml4"><use href="#undo"/></svg><i class="car k2"></i>
    <span class="more">»</span>
  </div>
  <div class="grp gb">
    <span class="t"><svg class="i"><use href="#def"/></svg>定义</span>
    <span class="t sigma"><b>Σ</b>汇总计算</span>
    <span class="t"><svg class="i"><use href="#cloud"/></svg>云检查</span>
    <span class="t off"><svg class="i"><use href="#flush"/></svg>平齐板顶</span>
    <span class="t"><svg class="i"><use href="#bino"/></svg>查找图元</span>
    <span class="t"><svg class="i"><use href="#glass"/></svg>查看钢筋量</span>
    <span class="t off"><svg class="i"><use href="#batch"/></svg>批量选择</span>
    <span class="more endm">»</span>
  </div>
  <div class="grp gc">
    <span class="combo"><span class="t"><svg class="i"><use href="#cube"/></svg>三维</span><i class="carbox"><i class="car"></i></i></span>
    <span class="t"><svg class="i"><use href="#top"/></svg>俯视<i class="car k2"></i></span>
    <span class="t on w75 mn1"><svg class="i"><use href="#orbit"/></svg>动态观察</span>
    <span class="t off mn1"><svg class="i"><use href="#local"/></svg>局部三维</span>
    <i class="sep ml1"></i>
    <span class="t"><svg class="i"><use href="#full"/></svg>全屏</span>
    <span class="t ml3"><svg class="i"><use href="#zoomi"/></svg>缩放<i class="car"></i></span>
    <span class="t ml3"><svg class="i"><use href="#hand"/></svg>平移<i class="car k2"></i></span>
    <span class="t ml2"><svg class="i"><use href="#srot"/></svg>屏幕旋转<i class="car kn1"></i></span>
    <i class="sep ml2"></i>
    <span class="t ml2"><svg class="i"><use href="#layer"/></svg>选择楼层</span>
    <span class="more endm">»</span>
  </div>
</div>

<div class="work">
  <aside class="side">
    <div class="navhead"><span>模块导航栏</span><svg class="tiny"><use href="#pin"/></svg><svg class="tiny"><use href="#xw"/></svg></div>
    <div class="sbtn h22">工程设置</div>
    <div class="sbtn h21">绘图输入</div>
    <div class="treebox">
      <div class="treetool"><svg class="i"><use href="#plus2"/></svg><svg class="i"><use href="#minus2"/></svg></div>
      <div class="tree sim">
        <div class="tlist">
          <div class="r g"><svg class="chev"><use href="#vdown"/></svg><svg class="i"><use href="#fopen"/></svg>梁</div>
          <div class="r c"><svg class="i"><use href="#beam"/></svg>梁(L)</div>
          <div class="r c last"><svg class="i"><use href="#ring"/></svg>圈梁(E)</div>
          <div class="r g"><svg class="chev"><use href="#vdown"/></svg><svg class="i"><use href="#fopen"/></svg>板</div>
          <div class="r c"><svg class="i"><use href="#slabi"/></svg>现浇板(B)</div>
          <div class="r c"><svg class="i"><use href="#spir"/></svg>螺旋板(B)</div>
          <div class="r c"><svg class="i"><use href="#cap"/></svg>柱帽(V)</div>
          <div class="r c"><svg class="i"><use href="#hole"/></svg>板洞(N)</div>
          <div class="r c"><svg class="i"><use href="#force"/></svg>板受力筋(S)</div>
          <div class="r c"><svg class="i"><use href="#negi"/></svg>板负筋(F)</div>
          <div class="r c last"><svg class="i"><use href="#band"/></svg>楼层板带(H)</div>
          <div class="r g"><svg class="chev"><use href="#vdown"/></svg><svg class="i"><use href="#fopen"/></svg>基础</div>
          <div class="r c"><svg class="i"><use href="#fbeam"/></svg>基础梁(F)</div>
          <div class="r c"><svg class="i"><use href="#raft"/></svg>筏板基础(M)</div>
          <div class="r c"><svg class="i"><use href="#pit"/></svg>集水坑(K)</div>
          <div class="r c"><svg class="i"><use href="#pier"/></svg>柱墩(Y)</div>
          <div class="r c"><svg class="i"><use href="#rmain"/></svg>筏板主筋(R)</div>
          <div class="r c"><svg class="i"><use href="#negi"/></svg>筏板负筋(X)</div>
          <div class="r c"><svg class="i"><use href="#ifound"/></svg>独立基础(P)</div>
          <div class="r c"><svg class="i"><use href="#strip"/></svg>条形基础(T)</div>
          <div class="r c"><svg class="i"><use href="#pcap"/></svg>桩承台(V)</div>
          <div class="r c"><svg class="i"><use href="#fbeam"/></svg>承台梁(F)</div>
          <div class="r c"><svg class="i"><use href="#pile"/></svg>桩(U)</div>
          <div class="r c last"><svg class="i"><use href="#band"/></svg>基础板带(W)</div>
          <div class="r g"><svg class="chev"><use href="#vright"/></svg><svg class="i"><use href="#fclose"/></svg>其它</div>
          <div class="r g"><svg class="chev"><use href="#vdown"/></svg><svg class="i"><use href="#fopen"/></svg>自定义</div>
          <div class="r c"><svg class="i"><use href="#xpt"/></svg>自定义点</div>
          <div class="r c"><svg class="i"><use href="#xln"/></svg><span class="seltxt">自定义线(X)</span><svg class="i tabi"><use href="#tab"/></svg><span class="newtag">NEW</span></div>
          <div class="r c"><svg class="i"><use href="#xar"/></svg>自定义面</div>
          <div class="r c last"><svg class="i"><use href="#xdim"/></svg>尺寸标注(W)</div>
          <div class="r g"><svg class="chev"><use href="#vdown"/></svg><svg class="i"><use href="#fopen"/></svg>识别<svg class="i tabi"><use href="#tab"/></svg><span class="newtag">NEW</span></div>
        </div>
        <div class="tscroll">
          <svg class="arr" viewBox="0 0 10 10"><path d="M1 7l4-4 4 4" stroke="#555" stroke-width="1.600" fill="none"/></svg>
          <div class="tthumb"></div>
          <svg class="arr" viewBox="0 0 10 10"><path d="M1 3l4 4 4-4" stroke="#555" stroke-width="1.600" fill="none"/></svg>
        </div>
      </div>
    </div>
    <div class="sbtn h21">单构件输入</div>
    <div class="sbtn h21">报表预览</div>
  </aside>

  <main class="main">
    <div class="row ra">
      <div class="grp rgrp off">
        <i class="grip"></i>
        <span class="t mn1"><svg class="i"><use href="#del"/></svg>删除</span><i class="sep"></i>
        <span class="t"><svg class="i"><use href="#copy"/></svg>复制</span>
        <span class="t"><svg class="i"><use href="#mirror"/></svg>镜像</span><i class="sep"></i>
        <span class="t"><svg class="i"><use href="#move"/></svg>移动</span>
        <span class="t"><svg class="i"><use href="#rot"/></svg>旋转</span><i class="sep"></i>
        <span class="t ml2"><svg class="i"><use href="#ext"/></svg>延伸</span>
        <span class="t ml1"><svg class="i"><use href="#trim"/></svg>修剪</span><i class="sep"></i>
        <span class="t"><svg class="i"><use href="#brk"/></svg>打断</span>
        <span class="t ml1"><svg class="i"><use href="#merge"/></svg>合并</span>
        <span class="t ml1"><svg class="i"><use href="#split"/></svg>分割</span><i class="sep"></i>
        <span class="t"><svg class="i"><use href="#align"/></svg>对齐<i class="car car-g"></i></span>
        <span class="t ml2"><svg class="i"><use href="#offs"/></svg>偏移</span>
        <span class="t"><svg class="i"><use href="#stch"/></svg>拉伸</span><i class="sep"></i>
        <span class="t"><svg class="i"><use href="#grip2"/></svg>设置夹点</span>
      </div>
    </div>
    <div class="row rb">
      <div class="grp rgrp gl">
        <span class="sel w57">第5层<i class="car"></i></span>
        <span class="sel w68">自定义<i class="car"></i></span>
        <span class="sel w69">自定义线<i class="car"></i></span>
        <span class="sel w70">ZDYX-13<i class="car"></i></span>
        <i class="sep"></i>
        <span class="t"><svg class="i"><use href="#attr"/></svg>属性</span>
        <span class="t on w75"><svg class="i"><use href="#edit"/></svg>编辑钢筋</span>
        <span class="t ml2"><svg class="i"><use href="#list"/></svg>构件列表</span>
        <span class="t ml5"><svg class="i"><use href="#pick"/></svg>拾取构件</span>
      </div>
      <div class="grp rgrp gr">
        <i class="grip"></i>
        <span class="t mn1"><svg class="i"><use href="#two"/></svg>两点</span>
        <span class="t"><svg class="i"><use href="#para"/></svg>平行</span>
        <span class="t mn1"><svg class="i"><use href="#ang"/></svg>点角<i class="car k3"></i></span>
        <span class="t"><svg class="i"><use href="#arcx"/></svg>三点辅轴<i class="car"></i></span>
        <span class="t"><svg class="i"><use href="#delx"/></svg>删除辅轴</span>
        <span class="t"><svg class="i"><use href="#dim"/></svg>尺寸标注<i class="car"></i></span>
      </div>
    </div>
    <div class="row rc">
      <div class="grp rgrp">
        <i class="grip"></i>
        <span class="t mn1"><svg class="i"><use href="#arrow"/></svg>选择<i class="car"></i></span>
        <i class="sep ml2"></i>
        <span class="t"><svg class="i"><use href="#linet"/></svg>直线</span>
        <span class="t"><svg class="i"><use href="#ptlen"/></svg>点加长度</span>
        <span class="t ml2"><svg class="i"><use href="#arc3"/></svg>三点画弧<i class="car"></i></span>
        <span class="sel w55 mn1"><i class="car"></i></span>
        <span class="t"><svg class="i"><use href="#rect"/></svg>矩形</span>
        <i class="sep ml1"></i>
        <span class="t mn2"><svg class="i"><use href="#smart"/></svg>智能布置<i class="car kn1"></i></span>
      </div>
      <div class="grp rgrp gz"><i class="grip"></i><span class="zbox"></span></div>
    </div>

    <div class="view">
      <svg class="scene" id="scene" viewBox="234 168 1132 285" preserveAspectRatio="none">
        <defs>
          <linearGradient id="glow" x1="0" y1="0" x2="0" y2="1"><stop offset="0" stop-color="#009c00"/><stop offset="1" stop-color="#006c00"/></linearGradient>
          <clipPath id="meshclip"><path d="M470 168L631 309L664 333L1366 378L1366 350L1151 168z"/></clipPath>
        </defs>
        <g fill="none" stroke="#007000">
          <path d="M234 180L470 195"/><path d="M273 374L1248 438"/>
          <path d="M410 298L588 452"/><path d="M530 364L503 417"/>
          <path d="M1174 372L1266 452"/><path d="M1263 412L1242 452"/>
        </g>
        <path d="M234 345L364 453H234z" fill="#00e000"/>
        <path d="M234 378L323 453H234z" fill="#009000"/>
        <path d="M439 168L588 305L631 309L664 333L1366 378V168z" fill="#005400"/>
        <path d="M729 168H1151L1195 222L800 197L740 192z" fill="#006e00"/>
        <path d="M660 168H691L637 302L610 285z" fill="#006000"/>
        <path d="M691 168H729L705 215L680 260L657 298L637 302z" fill="url(#glow)"/>
        <path d="M1151 168H1366V233L1220 225z" fill="#006e00"/>
        <path d="M1118 168H1335L1357 188L1180 177z" fill="#004a00"/>
        <path d="M1050 168H1118L1113 172L1070 170z" fill="#000"/>
        <g id="meshA" clip-path="url(#meshclip)"></g>
        <g id="meshC"></g>
        <path d="M473 168L631 307" stroke="#9fdc9f" fill="none"/>
        <path d="M1151 168L1366 350" stroke="#8ff08f" fill="none"/>
        <g id="rail"></g>
        <path d="M426 168L586 307L653 363L1366 410" stroke="#fff" stroke-width="1.800" fill="none"/>
        <path d="M664 333L1366 378" stroke="#e8ffe8" stroke-width="1.200" fill="none"/>
        <path d="M664 333L653 363M1355 383L1366 393" stroke="#fff" stroke-width="1.600" fill="none"/>
        <g fill="none" stroke="#9a9a9a" stroke-opacity=".7">
          <circle cx="799" cy="310" r="127"/>
          <circle cx="799" cy="183" r="8"/><circle cx="672" cy="310" r="8"/><circle cx="926" cy="310" r="8"/><circle cx="799" cy="437" r="8"/>
        </g>
        <path d="M264 378L288 401" stroke="#00f000" stroke-width="1.500" fill="none" stroke-opacity=".6"/>
        <path d="M270 379L264 378L266 384M262 373L272 383" stroke="#00f000" fill="none" stroke-opacity=".6"/>
        <path d="M289 402L303 366" stroke="#0a80ff" stroke-width="3.500"/>
        <path d="M306 358L306 374L298 370z" fill="#0a80ff"/>
        <path d="M296 355H303L295 364H303" stroke="#0a80ff" fill="none"/>
        <path d="M291 403L318 405" stroke="#ff0000" stroke-width="3.500"/>
        <path d="M327 405L316 400L320 405L316 410z" fill="#ff0000"/>
        <path d="M309 393L317 402M317 393L309 402" stroke="#ff0000" fill="none"/>
      </svg>
      <div class="rebar">
        <div class="rebar-t">钢筋显示控制面板</div>
        <div class="rebar-b">
          <label class="chk"><i class="cb"></i>水平纵筋</label>
          <label class="chk"><i class="cb"></i>横向钢筋</label>
          <label class="chk"><i class="cb"></i>显示其它图元</label>
          <label class="chk"><i class="cb"></i>显示详细公式</label>
        </div>
      </div>
    </div>

    <div class="row rd">
      <div class="grp rgrp g1">
        <i class="grip"></i>
        <span class="t ml2"><svg class="i"><use href="#ortho"/></svg>正交</span>
        <span class="t on w75 ml1"><svg class="i"><use href="#snap"/></svg>对象捕捉</span>
        <span class="t"><svg class="i"><use href="#dyn"/></svg>动态输入</span>
      </div>
      <div class="grp rgrp g2">
        <i class="grip"></i>
        <span class="t ml3"><svg class="i"><use href="#cross"/></svg>交点</span>
        <span class="t on w51"><svg class="i"><use href="#perp"/></svg>垂点</span>
        <span class="t on w51 mn3"><svg class="i"><use href="#mid"/></svg>中点</span>
        <span class="t ml1"><svg class="i"><use href="#apex"/></svg>顶点</span>
        <span class="t ml4"><svg class="i"><use href="#coord"/></svg>坐标</span>
      </div>
      <div class="grp rgrp g3">
        <i class="grip"></i>
        <span class="sel w57">不偏移<i class="car"></i></span>
        <i class="sep ml4"></i>
        <span class="dim">X=</span>
        <span class="spin w57 ml4">0<i class="spn"></i></span>
        <span class="dim mmy ml1">mm Y=</span>
        <span class="spin w57">0<i class="spn"></i></span>
        <span class="dim ml1">mm</span>
        <i class="sep ml8"></i>
        <i class="ucb"></i>
        <span class="ml8">旋转</span>
        <span class="spin w67 ml2">0.000<i class="spn"></i></span>
        <span class="dim">°</span>
      </div>
    </div>

    <div class="dockwrap">
      <div class="dock">
        <svg class="closex"><use href="#closex"/></svg>
        <div class="dots"></div>
      </div>
      <div class="dockmain">
        <div class="rowt">
          <svg class="i"><use href="#nfirst"/></svg>
          <svg class="i ml2"><use href="#nprev"/></svg>
          <svg class="i"><use href="#nnext"/></svg>
          <svg class="i ml2"><use href="#nlast"/></svg>
          <i class="sep mn2"></i>
          <svg class="i mn2"><use href="#nup"/></svg>
          <svg class="i"><use href="#ndown"/></svg>
          <i class="sep"></i>
          <span class="t off mn2"><svg class="i"><use href="#tins"/></svg>插入</span>
          <span class="t off"><svg class="i"><use href="#tdel"/></svg>删除</span>
          <span class="t off ml2"><svg class="i"><use href="#tscale"/></svg>缩尺配筋</span>
          <span class="t ml1"><svg class="i"><use href="#tinfo"/></svg>钢筋信息</span>
          <span class="t"><svg class="i"><use href="#tlib"/></svg>钢筋图库</span>
          <span class="t"><svg class="i"><use href="#toth"/></svg>其他<i class="car kn3"></i></span>
          <span class="ml2">关闭</span>
          <i class="sep ml2"></i>
          <span class="mn2">单构件钢筋总重(kg)：137.257</span>
        </div>
        <div class="tblbox">
          <div class="tblclip">
            <table class="grid sim">
              <colgroup>
                <col class="c0"><col class="c1"><col class="c2"><col class="c3"><col class="c4"><col class="c5"><col class="c6"><col class="c7"><col class="c8"><col class="c9"><col class="c10"><col class="c11"><col class="c12"><col class="c13"><col class="c14">
              </colgroup>
              <thead>
                <tr><th></th><th class="hot">筋号</th><th>直径(mm)</th><th>级别</th><th>图号</th><th>图形</th><th>计算公式</th><th>公式描述</th><th>长度(mm)</th><th>根数</th><th>搭接</th><th>损耗(%)</th><th>单重(kg)</th><th>总重(kg)</th><th>钢筋归类</th></tr>
              </thead>
              <tbody>
                <tr class="h29">
                  <td class="rn act">1*</td><td class="nm cur">横向钢筋.1</td><td>8</td><td class="ctr"><span class="lvl">Φ</span></td><td>0</td>
                  <td class="sh"><svg class="shape" viewBox="479 533 211 28"><path class="ln" d="M539.500 549V552H630V549"/><text transform="rotate(90 530 546)" x="530" y="549" text-anchor="middle">120</text><text transform="rotate(-90 638 541)" x="638" y="544" text-anchor="middle">120</text><text x="588" y="563" text-anchor="middle">2596</text></svg></td>
                  <td>40*d+2592+40*d</td><td>端头+净长+端头</td><td>2832</td><td>4</td><td>0</td><td>0</td><td>1.119</td><td>4.475</td><td>直筋</td>
                </tr>
                <tr class="h29">
                  <td class="rn">2</td><td class="nm">横向钢筋.2</td><td>8</td><td class="ctr"><span class="lvl">Φ</span></td><td>0</td>
                  <td class="sh"><svg class="shape" viewBox="479 562 211 28"><path class="ln" d="M539.500 578V581H630V578"/><text transform="rotate(90 530 575)" x="530" y="578" text-anchor="middle">120</text><text transform="rotate(-90 638 570)" x="638" y="573" text-anchor="middle">120</text><text x="588" y="592" text-anchor="middle">2596</text></svg></td>
                  <td>15*d+2592+15*d</td><td>端头+净长+端头</td><td>2832</td><td>19</td><td>0</td><td>0</td><td>1.119</td><td>21.254</td><td>直筋</td>
                </tr>
                <tr class="h33">
                  <td class="rn">3</td><td class="nm">横向钢筋.3</td><td>8</td><td class="ctr"><span class="lvl">Φ</span></td><td>0</td>
                  <td class="sh"><svg class="shape" viewBox="479 591 211 32"><path class="ln" d="M544 603V615H625V603"/><text transform="rotate(90 535 606)" x="535" y="609" text-anchor="middle">3285</text><text transform="rotate(-90 634 601)" x="634" y="604" text-anchor="middle">9820</text><text x="589" y="625" text-anchor="middle">2600</text></svg></td>
                  <td>40*d+2790+40*d</td><td>端头+净长+端头</td><td>3430</td><td>23</td><td>0</td><td>0</td><td>1.355</td><td>31.162</td><td>直筋</td>
                </tr>
                <tr class="h61">
                  <td class="rn">4</td><td class="nm">横向钢筋.4</td><td>8</td><td class="ctr"><span class="lvl">Φ</span></td><td>0</td>
                  <td class="sh"><svg class="shape" viewBox="479 624 211 60"><path class="ln bold" d="M568 628V675H586"/><text transform="rotate(-90 578 639)" x="578" y="642" text-anchor="middle">320</text><text transform="rotate(-90 578 665)" x="578" y="668" text-anchor="middle">83</text><text x="597" y="683" text-anchor="middle">150</text></svg></td>
                  <td>40*d+80+40*d</td><td>端头+净长+端头</td><td>550</td><td>4</td><td>0</td><td>0</td><td>0.217</td><td>0.869</td><td>直筋</td>
                </tr>
                <tr class="h29"><td class="rn"></td><td class="nm"></td><td></td><td></td><td></td><td></td><td></td><td></td><td></td><td></td><td></td><td></td><td></td><td></td><td></td></tr>
              </tbody>
            </table>
          </div>
          <div class="vbar">
            <svg class="arr" viewBox="0 0 10 10"><path d="M1 7l4-4 4 4" stroke="#555" stroke-width="1.600" fill="none"/></svg>
            <div class="vthumb"></div>
            <svg class="arr arrb" viewBox="0 0 10 10"><path d="M1 3l4 4 4-4" stroke="#555" stroke-width="1.600" fill="none"/></svg>
          </div>
          <div class="hbar">
            <svg class="arr" viewBox="0 0 10 10"><path d="M7 1L3 5l4 4" stroke="#555" stroke-width="1.600" fill="none"/></svg>
            <div class="hthumb"></div>
            <svg class="arr" viewBox="0 0 10 10"><path d="M3 1l4 4-4 4" stroke="#555" stroke-width="1.600" fill="none"/></svg>
          </div>
          <div class="corner"></div>
        </div>
      </div>
    </div>
  </main>
</div>

<div class="status sim">
  <span class="st s1">X=52701 Y=16963</span>
  <span class="st s2">层高:2.8m</span>
  <span class="st s3">底标高:13.07m</span>
  <span class="st s4">1(1)</span>
  <span class="st s5"></span>
</div>

<div class="ime">
  <svg class="imes"><use href="#sgou"/></svg>
  <b class="imez">英</b>
  <span class="imep">,</span>
  <svg class="i"><use href="#imic"/></svg>
  <svg class="i"><use href="#ikey"/></svg>
  <svg class="i"><use href="#iuser"/></svg>
  <svg class="i"><use href="#ishirt"/></svg>
  <svg class="i"><use href="#iwr"/></svg>
</div>

<footer class="taskbar">
  <div class="startb"><svg class="i"><use href="#win"/></svg></div>
  <div class="search"><i class="cortana"></i><span class="ph">在这里输入你要搜索的内容</span><svg class="i mici"><use href="#mic"/></svg></div>
  <div class="apps">
    <span class="app"><svg class="ai"><use href="#fan"/></svg></span>
    <span class="app"><svg class="ai"><use href="#swirl"/></svg><svg class="abell"><use href="#bellg"/></svg></span>
    <span class="app"><svg class="ai"><use href="#edge"/></svg></span>
    <span class="app"><svg class="ai"><use href="#store"/></svg></span>
    <span class="app"><svg class="ai"><use href="#fold"/></svg></span>
    <span class="app act"><svg class="ai"><use href="#logo"/></svg></span>
    <span class="app und"><svg class="ai"><use href="#note"/></svg></span>
    <span class="app und"><svg class="ai"><use href="#gblue"/></svg></span>
    <span class="app und"><svg class="ai"><use href="#egreen"/></svg></span>
  </div>
  <div class="tray">
    <div class="cpu"><span>28%</span><span>CPU使用</span></div>
    <svg class="ti-up"><use href="#up"/></svg>
    <svg class="ti-pl"><use href="#plug"/></svg>
    <svg class="i"><use href="#wifi"/></svg>
    <svg class="i"><use href="#spk"/></svg>
    <span class="zh">中</span>
    <svg class="i sg"><use href="#sgou"/></svg>
    <div class="clock"><span>21:27</span><span>2017/8/8</span></div>
    <div class="nt"><svg class="i"><use href="#notif"/></svg><span class="ntb">12</span></div>
  </div>
</footer>
<script src="mesh.js"></script>
</body>
</html>
```

FILE: styles.css
```css
*{box-sizing:border-box}
html,body{margin:0;padding:0}
body{width:1366px;height:768px;overflow:hidden;background:#f0f0f0;color:#111;font:12px/16px "Noto Sans CJK SC","Noto Sans",sans-serif;display:flex;flex-direction:column;position:relative}
i{font-style:normal}
.sprite{width:0;height:0;position:absolute}
.sim{font-family:"Liberation Serif","Noto Sans CJK SC",serif}
.i{width:16px;height:16px;flex:none}
.ml1{margin-left:1px}.ml2{margin-left:2px}.ml3{margin-left:3px}.ml4{margin-left:4px}.ml5{margin-left:5px}.ml8{margin-left:8px}
.mn1{margin-left:-1px}.mn2{margin-left:-2px}.mn3{margin-left:-3px}

.title{height:24px;background:#fff;display:flex;align-items:center;padding-left:2px;position:relative;flex:none}
.ttext{margin-left:5px;font-size:12.600px;white-space:nowrap}
.wctl{margin-left:auto;display:flex;align-items:center;gap:36px;padding-right:19px}
.w-min{width:10px;height:1px;background:#222}
.w-max{width:10px;height:10px;border:1px solid #222;box-shadow:2px -2px 0 -1px #fff,2px -2px 0 0 #222}
.w-x{width:11px;height:11px}
.badge{position:absolute;left:105px;top:-24px;width:40px;height:41px;border-radius:50%;background:#3fae45;box-shadow:0 0 0 1px #ddd,0 2px 4px rgba(0,0,0,.4);color:#fff;font-weight:700;font-size:11px;display:flex;align-items:flex-end;justify-content:center;padding-bottom:3px}

.menu{height:29px;background:#f9f9f9;display:flex;align-items:center;gap:9.500px;padding-left:7px;white-space:nowrap;flex:none}
.t{display:inline-flex;align-items:center;gap:4px;white-space:nowrap;flex:none}
.car{display:inline-block;width:0;height:0;border:3px solid transparent;border-top:3.500px solid #222;border-bottom:0;margin-left:1px;flex:none}
.car.k2{margin-left:2px}
.car.k3{margin-left:3px}
.car.k5{margin-left:3px}
.car.kn1{margin-left:-1px}
.car.kn3{margin-left:-2px}
.car-g{border-top-color:#888;margin-left:-2px}
.errbox{width:187px;height:28px;background:#fcfcfc;color:#3a6a10;text-align:center;line-height:28px;border-radius:3px;margin-left:-3px;flex:none}
.acct{margin-left:-4.500px;gap:6px}
.more{font-size:13px;font-weight:700;line-height:10px;color:#222}
.endm{margin-left:auto;padding-right:5px;position:relative;top:-4px}

.tbr1{height:31px;display:flex;gap:4px;padding:1px 0 0;align-items:flex-start;flex:none}
.grp{background:linear-gradient(#f8f8f8,#f3f3f3);display:flex;align-items:center;border-radius:3px;flex:none}
.tbr1 .grp{height:27px}
.ga{width:150px;gap:4px;padding-left:7px}
.ga .more{margin-left:18px;position:relative;top:-4px}
.gb{width:547px;gap:7px;padding-left:4px}
.sigma b{width:10px;font-size:13px;font-family:"Liberation Serif",serif;margin-right:5px;text-align:center}
.gc{width:661px;gap:5px;padding-left:0}
.combo{display:flex;align-items:center;background:#fff;height:27px;padding-left:2px}
.combo .t{width:48px}
.carbox{width:11px;height:27px;background:#f4f4f4;display:flex;align-items:center;justify-content:center}
.carbox .car{margin:0}
.sep{width:1px;height:18px;background:#bbb;flex:none}
.on{background:#dbe9f6;border:1px solid #2a8ad8;height:24px;padding-left:3px}
.w75{width:75px}
.w51{width:51px}
.off{color:#a4a4a4}
.off svg{opacity:.9}

.work{height:624px;display:flex;flex:none}
.side{width:234px;padding:0 4px 4px 0;flex:none;display:flex;flex-direction:column}
.navhead{height:15px;background:#0a58e0;color:#fff;font-size:13px;line-height:15px;display:flex;align-items:center;overflow:hidden;flex:none}
.navhead span{flex:1}
.tiny{width:12px;height:12px;margin-right:5px}
.sbtn{background:linear-gradient(#f4f4f4,#eeeeee);border:1px solid #a8a8a8;border-top-color:#c8c8c8;text-align:center;flex:none;font-size:12px;margin-top:1px}
.h22{height:22px;line-height:20px}
.h21{height:21px;line-height:19px}
.treebox{flex:1;margin-top:1px;background:#fff;border:1px solid #a8a8a8;display:flex;flex-direction:column;min-height:0}
.treetool{height:25px;flex:none;display:flex;align-items:center;gap:8px;padding:0 0 0 6px;background:#fff}
.tree{flex:1;margin:0 1px 0 2px;border:1px solid #a0a0a0;border-bottom-color:#909090;display:flex;min-height:0;overflow:hidden;background:#fff}
.tlist{flex:1;padding-top:2px;overflow:hidden;background:repeating-linear-gradient(to bottom,#777 0 1px,transparent 1px 2px) 11px 0/1px 100% no-repeat}
.tscroll{width:15px;flex:none;background:#f1f1f1;display:flex;flex-direction:column;align-items:center;position:relative}
.arr{width:10px;height:10px;margin:5px 0;flex:none}
.tthumb{width:15px;height:265px;background:#c8c8c8;margin-top:auto}
.tscroll .arr:last-child{margin:13px 0 4px}
.r{height:16px;display:flex;align-items:center;white-space:nowrap}
.g{padding-left:5px;font-family:"Noto Sans CJK SC",sans-serif}
.chev{width:10px;height:10px;background:#fff;flex:none;margin-right:7px}
.g .i{margin-right:5px}
.g .i.tabi{margin:0 0 0 2px}
.c{padding-left:42px;background-image:repeating-linear-gradient(to bottom,#777 0 1px,transparent 1px 2px),repeating-linear-gradient(to right,#777 0 1px,transparent 1px 2px);background-size:1px 100%,11px 1px;background-position:30px 0,30px 8px;background-repeat:no-repeat}
.c.last{background-size:1px 8px,11px 1px}
.c>.i:first-child{margin-right:4px}
.seltxt{background:#d4d4d4;height:16px;box-shadow:-20px 0 0 #d4d4d4}
.tabi{margin-left:2px}
.newtag{color:#111;background:#ffd800;font:700 8px/8px "Liberation Sans",sans-serif;padding:0 1px;align-self:flex-start;margin-top:1px}

.main{flex:1;min-width:0;display:flex;flex-direction:column}
.row{display:flex;flex:none;gap:0}
.ra{height:26px}
.rb{height:29px;align-items:flex-start}
.rb .grp{height:28px}
.rc{height:29px;padding:1px 0}
.rd{height:29px;padding:2px 0 3px;gap:3px}
.rgrp{height:100%;gap:6px;padding:0 4px}
.ra .rgrp{width:791px}
.grip{width:2px;height:14px;flex:none;background:repeating-linear-gradient(to bottom,#999 0 1px,transparent 1px 3px)}
.gl{width:567px;padding-left:9px;gap:3px}
.gl .sep{margin:0 2px}
.gr{margin-left:73px;width:421px;gap:7px}
.rc>.rgrp:first-child{width:489px}
.gz{margin-left:549px;width:26px;gap:3px;padding:0}
.zbox{width:21px;height:25px;background:#fafafa}
.sel{height:24px;background:#fff;display:flex;align-items:center;justify-content:space-between;padding:0 6px 0 2px;flex:none}
.sel .car{margin:0}
.w55{width:55px;justify-content:flex-end}
.w57{width:57px}
.w67{width:67px}
.w68{width:68px}
.w69{width:69px}
.w70{width:70px}

.view{height:285px;flex:none;position:relative;background:#000;overflow:hidden}
.scene{width:1132px;height:285px;display:block}
.rebar{position:absolute;left:10px;top:3px;width:167px;height:177px;background:#fff;border-right:2px solid #808080;border-bottom:2px solid #808080;display:flex;flex-direction:column;padding:1px 1px 0 1px}
.rebar-t{height:30px;line-height:28px;color:#b0b0b0;padding-left:7px;flex:none}
.rebar-b{flex:1;border:1px solid #808080;border-right-color:#a0a0a0;padding-top:1px;font-size:12px;color:#000}
.chk{display:flex;align-items:center;height:12px;line-height:12px;gap:4px;padding-left:3px;white-space:nowrap}
.cb{width:10px;height:10px;border:1px solid #8a8a8a;background:#f4f4f4;position:relative;flex:none}
.cb::after{content:"";position:absolute;left:2px;top:0;width:3px;height:6px;border:solid #333;border-width:0 1px 1px 0;transform:rotate(40deg)}

.rd .g1{width:210px;gap:3px}
.rd .g2{width:263px;gap:3px;padding-left:2px}
.rd .g3{width:408px;gap:2px;padding-left:2px;white-space:nowrap}
.rd .g3>span{flex:none}
.dim{color:#999}
.mmy{width:42px}
.spin{height:24px;background:#fafafa;border:1px solid #888;display:flex;align-items:center;justify-content:flex-end;color:#888;padding-right:4px;flex:none;gap:8px}
.spn{width:6px;height:14px;position:relative;flex:none}
.spn::before,.spn::after{content:"";position:absolute;left:0;border:3px solid transparent}
.spn::before{top:-1px;border-bottom:3px solid #666;border-top:0}
.spn::after{bottom:-1px;border-top:3px solid #666;border-bottom:0}
.ucb{width:10px;height:10px;border:1px solid #888;background:#fff;flex:none}

.dockwrap{display:flex;flex:1;min-height:0;margin-top:2px}
.dock{width:12px;flex:none;display:flex;flex-direction:column;padding-top:2px;padding-left:1px}
.closex{width:11px;height:11px;flex:none}
.dots{flex:1;width:6px;margin:1px 0 3px 2px;background:radial-gradient(circle,#bbb 0 1px,transparent 1px) 0 0/3px 4px}
.dockmain{flex:1;min-width:0;display:flex;flex-direction:column}
.rowt{height:26px;margin-top:2px;flex:none;display:flex;align-items:center;gap:7px;padding-left:3px;background:linear-gradient(#fafafa,#f7f7f7);margin-right:2px;white-space:nowrap}
.tblbox{flex:1;min-height:0;margin:1px 2px 3px 0;border:1px solid #a8a8a8;background:#fff;display:grid;grid-template-columns:minmax(0,1fr) 16px;grid-template-rows:minmax(0,1fr) 17px}
.tblclip{overflow:hidden;background:#fff;padding-top:1px;min-width:0;min-height:0;grid-row:1;grid-column:1}
.grid{table-layout:fixed;border-collapse:collapse;width:1145px}
.c0{width:34px}.c1{width:73px}.c2{width:56px}.c3{width:36px}.c4{width:33px}.c5{width:211px}.c6{width:165px}.c7{width:156px}.c8{width:61px}.c9{width:38px}.c10{width:40px}.c11{width:49px}.c12{width:61px}.c13{width:60px}.c14{width:72px}
.grid th,.grid td{border:1px solid #b8b8b8;padding:0 2px;white-space:nowrap;overflow:hidden;font-weight:400;line-height:14px}
.grid th{height:18px;background:linear-gradient(#fff,#ececec);text-align:center}
.grid th.hot{background:linear-gradient(#ffe8b0,#f5c060);color:#800080}
.grid td{background:#ccffd8;font-size:12px}
.h29{height:29px}
.h33{height:33px}
.h61{height:61px}
.grid td.rn{background:linear-gradient(90deg,#fafafa,#ededed);text-align:center}
.grid td.act{background:#ffd78c;color:#800080}
.grid td.nm{border-right:1px solid #000}
.grid td.cur{background:#aee8d8}
.grid td.ctr{text-align:center}
.grid td.sh{padding:0}
.lvl{text-decoration:underline;font-weight:700}
.shape{display:block;width:211px}
.h29 .shape{height:28px}
.h33 .shape{height:32px}
.h61 .shape{height:60px}
.shape text{font:12px "Liberation Serif",serif;fill:#000}
.ln{fill:none;stroke:#000;stroke-width:1}
.bold{stroke-width:2.500}
.vbar{background:#f1f1f1;display:flex;flex-direction:column;align-items:center;grid-row:1;grid-column:2;overflow:hidden}
.vthumb{width:15px;height:38px;background:#c8c8c8;margin-top:-3px}
.arrb{margin-top:auto}
.hbar{background:#fff;display:flex;align-items:center;grid-row:2;grid-column:1;padding:0 4px}
.hbar .arr{margin:0 2px}
.hbar .arr:last-child{margin-left:auto}
.hthumb{width:707px;height:16px;background:#c8c8c8;margin-left:0}
.corner{background:#fff;grid-row:2;grid-column:2}

.status{height:20px;flex:none;display:flex;gap:2px;font-size:12px;background:#f0f0f0}
.st{background:#f6f6f6;border:1px solid #dcdcdc;padding-left:2px;line-height:18px;white-space:nowrap}
.s1{width:148px;padding-left:1px}.s2{width:78px}.s3{width:98px}.s4{width:48px}.s5{flex:1}

.ime{position:absolute;right:5px;top:700px;height:28px;display:flex;align-items:center;gap:7px;color:#1a72c8}
.imes{width:25px;height:26px}
.imez{font-size:13px}
.imep{font-size:14px;font-weight:700;margin:0 7px 0 2px}

.taskbar{height:40px;flex:none;background:#031519;display:flex;color:#fff}
.startb{width:48px;background:#000;display:flex;align-items:center;justify-content:center}
.search{width:344px;background:#3a3a3a;display:flex;align-items:center;color:#a8a8a8;font-size:13px;padding-left:11px}
.cortana{width:20px;height:20px;border:3px solid #e6e6e6;border-radius:50%;flex:none}
.ph{margin-left:5px}
.mici{margin-left:auto;margin-right:13px}
.apps{display:flex;margin-left:4px}
.app{width:49.300px;display:flex;align-items:center;justify-content:center;position:relative}
.ai{width:24px;height:24px}
.abell{position:absolute;left:27px;top:6px;width:12px;height:14px}
.act{background:#2d424f;border-bottom:2px solid #7db8e8}
.und{border-bottom:2px solid #7db8e8;margin:0 2px;width:45.300px}
.tray{flex:1;display:flex;align-items:center;font-size:13px}
.cpu,.clock{display:flex;flex-direction:column;align-items:center;line-height:17px;color:#eee}
.cpu{margin-left:178px;width:60px}
.ti-up{width:14px;height:10px;margin-left:12px}
.ti-pl{width:18px;height:16px;margin-left:10px}
.tray>.i{margin-left:7px}
.zh{margin-left:8px;font-size:14px}
.tray>.i.sg{margin-left:13px}
.clock{width:64px;margin-left:14px}
.nt{position:relative;margin-left:14px;width:28px;height:28px}
.ntb{position:absolute;left:8px;top:8px;width:20px;height:20px;border-radius:50%;background:#333;border:1px solid #ccc;font-size:11px;font-weight:700;line-height:18px;text-align:center}
```

FILE: mesh.js
```js
(function () {
  var NS = "http://www.w3.org/2000/svg";
  function line(parent, x1, y1, x2, y2, color, width) {
    var el = document.createElementNS(NS, "line");
    el.setAttribute("x1", x1.toFixed(1));
    el.setAttribute("y1", y1.toFixed(1));
    el.setAttribute("x2", x2.toFixed(1));
    el.setAttribute("y2", y2.toFixed(1));
    el.setAttribute("stroke", color);
    el.setAttribute("stroke-width", width);
    parent.appendChild(el);
  }
  var A = document.getElementById("meshA");
  var C = document.getElementById("meshC");
  var R = document.getElementById("rail");

  // rows that run with the front edge
  function xLeft(y) { return 470 + (y - 168) / 0.875; }
  function xRight(y) { return 1151 + (y - 168) / 0.846; }
  var y = 172, step = 10;
  while (y < 346) {
    var k = 0.015 + (y - 170) / 172 * 0.05;
    var x1 = 800, x2 = 800, i;
    for (i = 0; i < 6; i++) {
      x1 = xLeft(y + (x1 - 800) * k);
      x2 = xRight(y + (x2 - 800) * k);
    }
    var col = y < 198 ? "#3cb03c" : "#5a9a4c";
    line(A, x1, y + (x1 - 800) * k, x2 - 14, y + (x2 - 14 - 800) * k, col, 1.6);
    y += step;
    step += 0.1;
  }
  // diagonals, in pairs, parallel to the left edge
  for (var b = -120; b < 1150; b += 32) {
    line(A, b, 168, b + 290, 168 + 290 * 0.84, "#55964a", 1.2);
    line(A, b + 8, 168, b + 298, 168 + 290 * 0.84, "#55964a", 1.2);
  }
  // steep lines running up from the front edge
  function front(x) { return 333 + (x - 664) * 0.0641; }
  var n = 0;
  for (var f = 668; f < 1362; f += 33) {
    var top = 232 + (f - 670) * 0.045 + (n % 2 ? 26 : 0);
    line(C, f, front(f), f + (front(f) - top) * 0.42, top, "#5a9a4c", 1.3);
    line(C, f + 14, front(f + 14), f + 14 + (front(f + 14) - top - 22) * 0.42, top + 22, "#5a9a4c", 1.1);
    n++;
  }

  // truss rail below the front edge
  var rail = "#a89a94";
  function up(x) { return 339 + (x - 664) * 0.0583; }
  function lo(x) { return 351 + (x - 656) * 0.064; }
  line(R, 664, up(664), 1366, up(1366), rail, 2.2);
  line(R, 656, lo(656), 1366, lo(1366), rail, 2.2);
  for (var u = 671; u < 1366; u += 33.6) {
    line(R, u - 6, lo(u - 6), u, up(u), rail, 1.4);
    line(R, u, up(u), u + 27.6, lo(u + 27.6), rail, 1.4);
  }
  line(R, 586, 307, 635, 309, rail, 1.6);
  line(R, 603, 318, 657, 324, rail, 1.6);
  line(R, 619, 333, 664, 337, rail, 1.6);
  line(R, 635, 348, 658, 349, rail, 1.6);
  line(R, 600, 309, 626, 331, rail, 1.1);
  line(R, 616, 309, 650, 340, rail, 1.1);
  line(R, 628, 320, 622, 334, rail, 1.1);
  line(R, 631, 309, 626, 322, rail, 1.1);
})();
```
